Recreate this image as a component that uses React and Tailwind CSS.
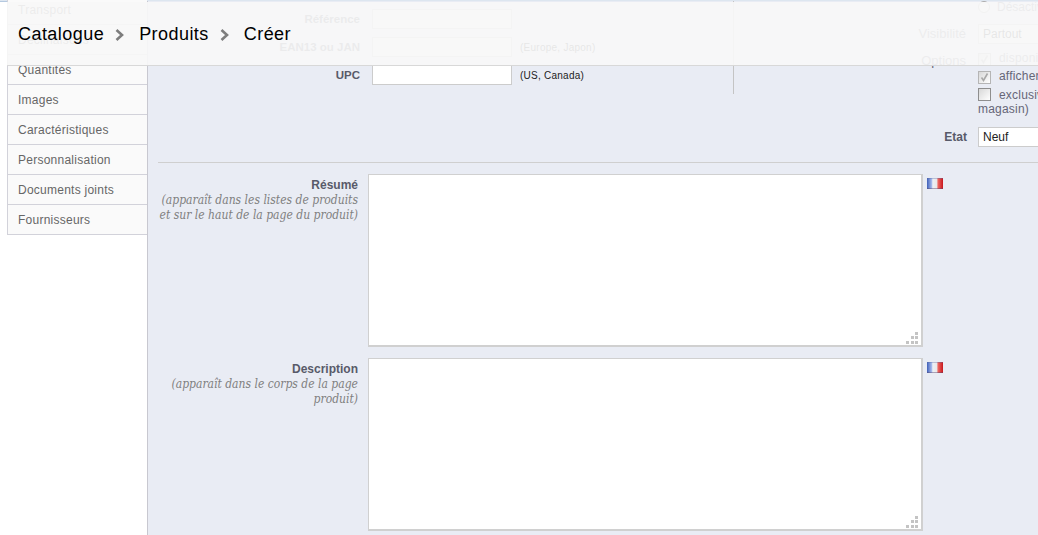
import React from 'react';

const tabs = ['Transport', 'Déclinaisons', 'Quantités', 'Images', 'Caractéristiques', 'Personnalisation', 'Documents joints', 'Fournisseurs'];

const Flag = () => (
    <svg width="16" height="11" viewBox="0 0 16 11" className="shrink-0">
        <defs>
            <linearGradient id="fr" x1="0" y1="0" x2="1" y2="0">
                <stop offset="0" stopColor="#3f5fb8" />
                <stop offset="0.3" stopColor="#a9bdee" />
                <stop offset="0.36" stopColor="#eef0f4" />
                <stop offset="0.62" stopColor="#e8e8ea" />
                <stop offset="0.68" stopColor="#ee6a64" />
                <stop offset="1" stopColor="#c8161c" />
            </linearGradient>
        </defs>
        <rect x="0" y="0" width="16" height="11" fill="url(#fr)" />
        <rect x="0" y="0" width="16" height="1" fill="#5a6aa0" fillOpacity="0.35" />
        <rect x="0" y="10" width="16" height="1" fill="#5a4a70" fillOpacity="0.45" />
    </svg>
);

const Chevron = () => (
    <svg width="9" height="12" viewBox="0 0 9 12" className="shrink-0">
        <path d="M1.5 1 L7 6 L1.5 11" fill="none" stroke="#7d7d7d" strokeWidth="2.6" />
    </svg>
);

const Grip = () => (
    <svg width="12" height="12" viewBox="0 0 12 12" className="absolute right-[5px] bottom-[3px]">
        <g fill="#c4c4c4">
            <rect x="9" y="0" width="3" height="3" />
            <rect x="5" y="4" width="3" height="3" />
            <rect x="9" y="4" width="3" height="3" />
            <rect x="0" y="9" width="3" height="3" />
            <rect x="5" y="9" width="3" height="3" />
            <rect x="9" y="9" width="3" height="3" />
        </g>
    </svg>
);

const Check = ({ checked, dark }) => (
    <span className={`inline-flex w-[13px] h-[13px] mr-[8px] align-[-2px] items-center justify-center border bg-gradient-to-br from-[#d8d8d8] to-white ${dark ? 'border-[#8e8e8e]' : 'border-[#b5b5b5]'}`}>
        {checked && (
            <svg width="9" height="9" viewBox="0 0 9 9">
                <path d="M1.5 4.5 L3.5 7.5 L7.5 0.5" fill="none" stroke="#a8a8a8" strokeWidth="1.6" />
            </svg>
        )}
    </span>
);

const InputRow = ({ label, hint }) => (
    <div className="flex items-center h-[20px]">
        <label className="w-[215px] shrink-0 pr-[12px] pt-[1px] text-right text-[11.5px] font-bold text-[#585a69]">{label}</label>
        <div className="w-[140px] h-[20px] shrink-0 bg-white border border-[#cccccc]" />
        {hint && <span className="ml-[8px] text-[10px] tracking-[0.25px] text-[#222]">{hint}</span>}
    </div>
);

const Editor = ({ label, hint }) => (
    <div className="flex">
        <div className="w-[200px] shrink-0 text-right leading-[15px] pt-[4px]">
            <div className="text-[12px] font-bold text-[#585a69]">{label}</div>
            {hint.map((line) => (
                <div key={line} className="text-[12px] italic text-[#7f7f7f] font-['DejaVu_Serif_Condensed','DejaVu_Serif',serif] whitespace-nowrap">{line}</div>
            ))}
        </div>
        <div className="relative ml-[10px] w-[555px] h-[173px] shrink-0">
            <textarea className="block w-full h-full resize-none bg-white border border-[#d0d0d0] border-r-2 border-b-2" />
            <Grip />
        </div>
        <div className="ml-[4px] mt-[4px]">
            <Flag />
        </div>
    </div>
);

const App = () => {
    return (
        <div className="relative w-[1038px] h-[535px] overflow-hidden bg-white font-['Liberation_Sans',Arial,sans-serif]">
            <div className="h-[2px] border-t border-[#dde6f0] bg-[#b5c9e0]" />

            <div className="flex h-[533px]">
                {/* Tabs */}
                <div className="ml-[7px] w-[140px] shrink-0 -mt-[7px] self-start border-l border-[#d2d2da] bg-[#fafafa]">
                    {tabs.map((tab) => (
                        <div key={tab} className="h-[30px] pl-[10px] flex items-center border-b border-[#d2d2da] text-[12px] tracking-[0.25px] text-[#666666]">
                            {tab}
                        </div>
                    ))}
                </div>

                {/* Form */}
                <div className="flex-1 min-w-0 -mt-[1px] border-l border-[#c8c8d0] bg-[#e9ecf4] overflow-hidden">
                    <div className="flex h-[162px] ml-[10px] border-b border-[#cfcfcf]">
                        <div className="w-[577px] h-[93px] shrink-0 pt-[8px] flex flex-col gap-[8px] border-r border-[#c4c4c4] -ml-[1px]">
                            <InputRow label="Référence" />
                            <InputRow label="EAN13 ou JAN" hint="(Europe, Japon)" />
                            <InputRow label="UPC" hint="(US, Canada)" />
                        </div>
                        <div className="w-[500px] shrink-0 text-[12px] text-[#666677]">
                            <div className="flex items-center h-[13px] -mt-[1px] ml-[244px] whitespace-nowrap">
                                <span className="w-[12px] h-[12px] mr-[7px] rounded-full bg-white border border-[#aaaaaa]" />
                                Désactivé
                            </div>
                            <div className="flex items-center h-[20px] mt-[11px]">
                                <span className="w-[232px] shrink-0 text-right text-[13px]">Visibilité</span>
                                <div className="ml-[12px] w-[200px] shrink-0 h-[20px] pl-[4px] flex items-center bg-white border border-[#cccccc] text-[#222]">Partout</div>
                            </div>
                            <div className="flex mt-[5px]">
                                <span className="w-[232px] shrink-0 text-right text-[13px] mt-[2px]">Options</span>
                                <div className="ml-[12px] w-[220px] shrink-0 tracking-[0.2px]">
                                    <div className="h-[18px] whitespace-nowrap leading-[18px]"><Check checked />disponible à la vente</div>
                                    <div className="h-[18px] whitespace-nowrap leading-[18px]"><Check checked />afficher le prix</div>
                                    <div className="leading-[14px] pt-[3px]"><Check dark />exclusivité web (non vendu en magasin)</div>
                                </div>
                            </div>
                            <div className="flex items-center h-[20px] mt-[11px]">
                                <span className="w-[233px] shrink-0 text-right font-bold text-[#585a69]">Etat</span>
                                <div className="ml-[11px] w-[200px] shrink-0 h-[20px] pl-[4px] flex items-center bg-white border border-[#cccccc] text-[#222]">Neuf</div>
                            </div>
                        </div>
                    </div>

                    <div className="ml-[10px] pt-[11px] flex flex-col gap-[11px]">
                        <Editor label="Résumé" hint={['(apparaît dans les listes de produits', 'et sur le haut de la page du produit)']} />
                        <Editor label="Description" hint={['(apparaît dans le corps de la page', 'produit)']} />
                    </div>
                </div>
            </div>

            {/* Fixed breadcrumb bar */}
            <div className="absolute left-[7px] right-0 top-[2px] h-[64px] pl-[11px] pt-[2px] flex items-center border-b border-[#d8d8d8] bg-[#f7f7f7]/[0.92] text-[18px] tracking-[0.45px] text-black">
                <span>Catalogue</span>
                <span className="ml-[11px] mr-[15px]"><Chevron /></span>
                <span>Produits</span>
                <span className="ml-[11px] mr-[15px]"><Chevron /></span>
                <span>Créer</span>
            </div>
        </div>
    );
};

export default App;
